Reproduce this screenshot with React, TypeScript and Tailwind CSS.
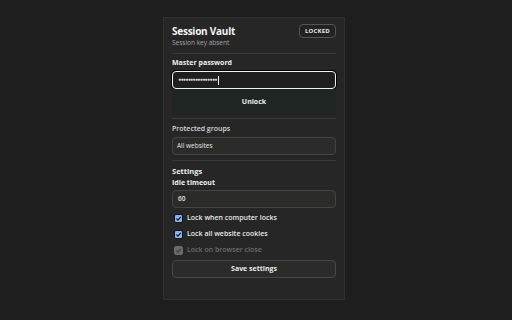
import React from 'react';

const font = { fontFamily: '"Open Sans", "Noto Sans", sans-serif' };

const Check: React.FC<{ label: string; disabled?: boolean }> = ({ label, disabled }) => (
  <div className="h-[16px] flex items-center gap-[4px] pl-[2px]">
    <span
      className={`w-[9px] h-[9px] rounded-[2px] flex items-center justify-center border ${
        disabled ? 'bg-[#6a6a6a] border-[#6a6a6a]' : 'bg-[#8ab4f8] border-[#111]'
      }`}
    >
      <svg width="7" height="7" viewBox="0 0 10 10">
        <path d="M2 5.2 L4.2 7.4 L8.2 2.6" fill="none" stroke={disabled ? '#3a3a3a' : '#111'} strokeWidth="1.6" />
      </svg>
    </span>
    <span className={`text-[7px] font-semibold ${disabled ? 'text-[#6c6c6c]' : 'text-[#e8e8e8]'}`}>{label}</span>
  </div>
);

const App: React.FC = () => {
  return (
    <div className="w-[512px] h-[320px] bg-[#1e1e1e] overflow-hidden" style={font}>
      <div className="ml-[163px] mt-[17px] w-[182px] h-[283px] bg-[#262626] border border-[#313131] px-[8px] pt-[7px]">
        {/* header */}
        <div className="flex justify-between items-start">
          <div>
            <div className="h-[12px] leading-[12px] text-[10px] font-bold text-[#f3f3f3] tracking-[-0.25px]">Session Vault</div>
            <div className="mt-[1px] h-[10px] leading-[10px] text-[6.5px] text-[#a3a3a3]">Session key absent</div>
          </div>
          <span className="-mt-[1px] w-[37px] h-[14px] rounded-[4px] border border-[#555] bg-[#222] text-[6px] font-bold text-[#e8e8e8] flex items-center justify-center tracking-[0.2px]">
            LOCKED
          </span>
        </div>
        <div className="mt-[5px] border-t border-[#383838]" />

        <div className="mt-[4px] h-[10px] leading-[10px] text-[7px] font-bold text-[#f0f0f0]">Master password</div>
        <div className="mt-[3px] h-[18px] rounded-[4px] border-[1.5px] border-[#f2f2f2] bg-[#1f1f1f] flex items-center pl-[5px] shadow-[0_0_0_1px_#000]">
          <span className="text-[5px] text-[#d8d8d8] tracking-[-0.6px]">●●●●●●●●●●●●●●●●</span>
          <span className="ml-[1px] w-[1px] h-[9px] bg-[#f2f2f2]" />
        </div>
        <div className="h-[26px] bg-[#1f2522] flex items-center justify-center text-[7px] font-bold text-[#ececec]">Unlock</div>
        <div className="mt-[3px] border-t border-[#383838]" />

        <div className="mt-[5px] h-[10px] leading-[10px] text-[7px] font-semibold text-[#d6d6d6]">Protected groups</div>
        <div className="mt-[3px] h-[18px] rounded-[4px] border border-[#444] bg-[#2b2b2a] flex items-center pl-[4px] text-[6.5px] text-[#e6e6e6]">
          All websites
        </div>
        <div className="mt-[5px] border-t border-[#383838]" />

        <div className="mt-[5px] h-[10px] leading-[10px] text-[7.5px] font-bold text-[#ececec]">Settings</div>
        <div className="mt-[2px] h-[10px] leading-[10px] text-[7px] font-bold text-[#f0f0f0]">Idle timeout</div>
        <div className="mt-[2px] h-[18px] rounded-[4px] border border-[#444] bg-[#2b2b2a] flex items-center pl-[5px] text-[6.5px] font-semibold text-[#e6e6e6]">
          60
        </div>

        <div className="mt-[2px]">
          <Check label="Lock when computer locks" />
          <Check label="Lock all website cookies" />
          <Check label="Lock on browser close" disabled />
        </div>

        <div className="mt-[2px] h-[18px] rounded-[4px] border border-[#474747] bg-[#2b2b29] flex items-center justify-center text-[7px] font-bold text-[#ececec]">
          Save settings
        </div>
      </div>
    </div>
  );
};

export default App;
